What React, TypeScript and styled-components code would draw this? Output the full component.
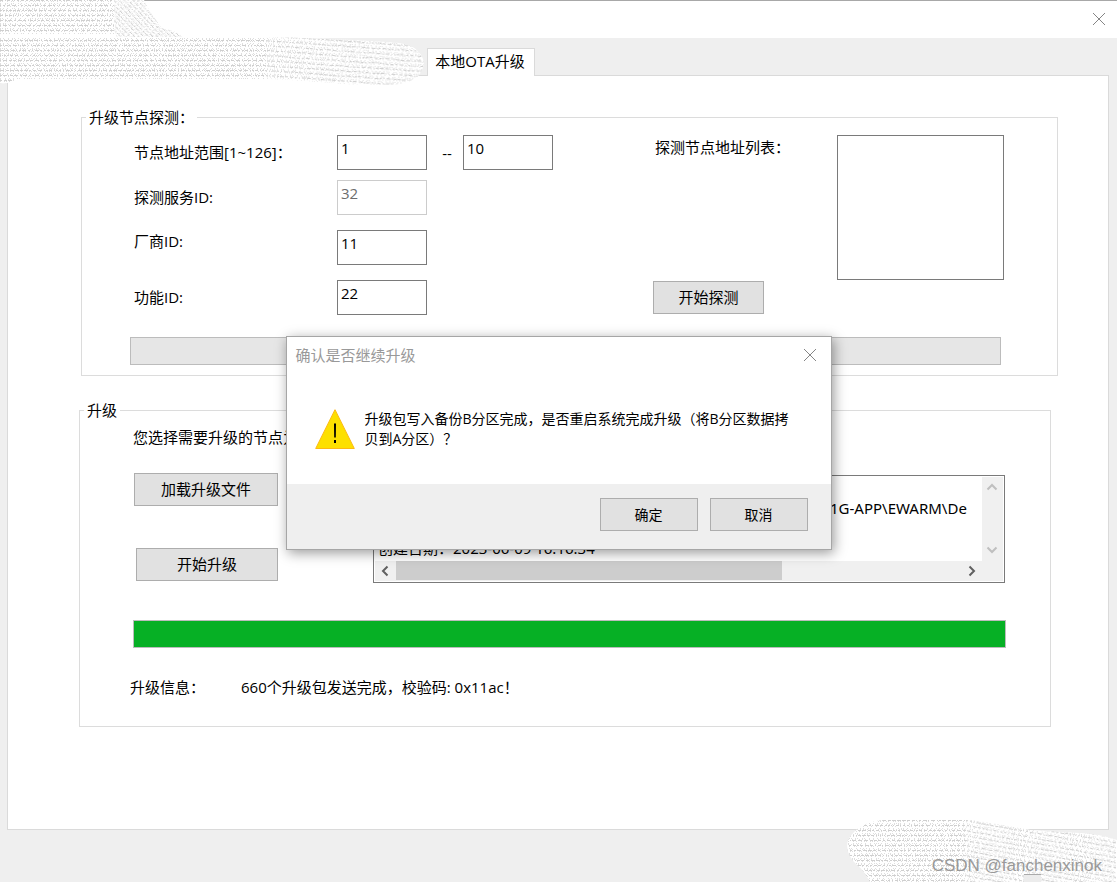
import React from "react";
import styled, { createGlobalStyle, css } from "styled-components";

const GlobalStyle = createGlobalStyle`
  *, *::before, *::after { box-sizing: border-box; }
  body { margin: 0; background: #efefef; }
  body, button, input, textarea {
    font-family: "Open Sans", "Noto Sans CJK SC", sans-serif;
    font-size: 15px;
    line-height: 20px;
    color: #000;
  }
`;

const Window = styled.div`
  position: relative;
  display: flex;
  flex-direction: column;
  min-height: 100vh;
  padding-bottom: 52px;
  overflow: hidden;
  background: #efefef;
`;

const TitleBar = styled.header`
  display: flex;
  justify-content: flex-end;
  align-items: center;
  height: 38px;
  padding: 0 11px 2px 0;
  border-top: 1px solid #a8a8a8;
  background: #fff;
`;

const CloseButton = styled.button`
  display: flex;
  padding: 0;
  border: 0;
  background: none;
`;

const TabStrip = styled.nav`
  display: flex;
  margin-top: 10px;
  padding-left: 427px;
`;

const Tab = styled.button`
  position: relative;
  width: 108px;
  height: 28px;
  margin-bottom: -1px;
  padding: 0 2px 4px 0;
  border: 1px solid #dadada;
  border-bottom: 0;
  background: #fff;
`;

const Panel = styled.main`
  flex: 1;
  margin: 0 8px 0 7px;
  padding: 31px 50px 20px 71px;
  border: 1px solid #dadada;
  background: #fff;
`;

const Group = styled.fieldset<{ $kind: "probe" | "upgrade" }>`
  min-width: 0;
  padding: 0;
  border: 1px solid #dcdcdc;
  ${(p) =>
    p.$kind === "probe"
      ? css`
          margin: 0 0 0 2px;
        `
      : css`
          margin: 24px 7px 0 0;
        `}
`;

const Legend = styled.legend`
  margin-left: 4px;
  padding: 0 3px;
`;

const ProbeBody = styled.div`
  display: grid;
  grid-template-columns: 520px 184px 1fr;
  margin: 8px 53px 0 51px;
`;

const FieldList = styled.div`
  display: flex;
  flex-direction: column;
  gap: 15px;
`;

const FieldPair = styled.div`
  display: flex;
  flex-direction: column;
  gap: 10px;
`;

const Field = styled.div<{ $top?: boolean }>`
  display: flex;
  align-items: ${(p) => (p.$top ? "flex-start" : "center")};
`;

const FieldLabel = styled.label`
  width: 204px;
  padding: 1px 0 3px 1px;
`;

const TextBox = styled.input`
  width: 90px;
  height: 35px;
  padding: 0 3px 10px;
  border: 1px solid #7a7a7a;
  border-radius: 0;
  background: #fff;
  &:disabled {
    border-color: #ccc;
    color: #6d6d6d;
  }
`;

const Dash = styled.span`
  width: 36px;
  padding-left: 4px;
  text-align: center;
`;

const ProbeSide = styled.div`
  display: flex;
  flex-direction: column;
  justify-content: space-between;
  align-items: flex-start;
  padding-bottom: 1px;
`;

const NodeListName = styled.span`
  padding: 2px 0 0 2px;
`;

const NodeList = styled.div`
  height: 145px;
  border: 1px solid #7a7a7a;
`;

const PushButton = styled.button<{ $width: number; $small?: boolean }>`
  width: ${(p) => p.$width}px;
  height: 33px;
  padding: 0 0 ${(p) => (p.$small ? 0 : 2)}px;
  border: 1px solid #adadad;
  background: #e1e1e1;
  font-size: ${(p) => (p.$small ? 14 : 15)}px;
`;

const Progress = styled.div<{ $done?: boolean }>`
  height: 28px;
  border: 1px solid #bcbcbc;
  background: ${(p) => (p.$done ? "#06b025" : "#e6e6e6")};
  margin: ${(p) => (p.$done ? "37px 44px 0 53px" : "22px 56px 10px 48px")};
`;

const NodeHint = styled.p`
  margin: 7px 0 26px 53px;
`;

const UpgradeBody = styled.div`
  display: flex;
  align-items: flex-start;
  margin: 0 45px 0 54px;
`;

const UpgradeActions = styled.div`
  display: flex;
  flex-direction: column;
  align-items: flex-end;
  gap: 42px;
  width: 144px;
`;

const LogBox = styled.div`
  flex: 1;
  display: grid;
  grid-template: 84px 20px / 1fr 21px;
  min-width: 0;
  height: 108px;
  margin: 2px 0 0 95px;
  padding: 1px;
  border: 1px solid #7a7a7a;
  background: #fff;
`;

const LogText = styled.textarea`
  width: 100%;
  height: 84px;
  padding: 1px 0 0 3px;
  border: 0;
  outline: 0;
  resize: none;
  overflow: hidden;
  white-space: pre;
  tab-size: 452px;
  background: none;
  font-family: "Noto Sans", "Noto Sans CJK SC", sans-serif;
`;

const ScrollColumn = styled.div`
  grid-row: 1 / 3;
  grid-column: 2;
  display: flex;
  flex-direction: column;
  justify-content: space-between;
  padding-bottom: 21px;
  background: #f0f0f0;
`;

const ScrollRow = styled.div`
  display: flex;
  background: #f0f0f0;
`;

const ScrollThumb = styled.div`
  width: 386px;
  height: 19px;
  margin: 0 auto 0 1px;
  background: #cdcdcd;
`;

const ArrowButton = styled.button`
  display: flex;
  justify-content: center;
  align-items: center;
  width: 20px;
  height: 20px;
  padding: 0;
  border: 0;
  background: none;
`;

const Status = styled.p`
  display: flex;
  margin: 29px 0 29px 50px;
`;

const StatusName = styled.span`
  width: 111px;
`;

const Dialog = styled.section`
  position: absolute;
  top: 336px;
  left: 50%;
  width: 546px;
  margin-left: -273px;
  border: 1px solid #a6a6a6;
  background: #fff;
  box-shadow: 2px 3px 12px rgba(0, 0, 0, 0.4);
`;

const DialogTitle = styled.header`
  display: flex;
  justify-content: space-between;
  align-items: center;
  height: 36px;
  padding: 0 14px 0 9px;
  color: #999;
`;

const DialogHeading = styled.h1`
  margin: 0;
  font-size: 15px;
  font-weight: 400;
`;

const DialogBody = styled.div`
  display: flex;
  gap: 10px;
  height: 111px;
  padding: 36px 36px 0 28px;
  font-size: 14px;
`;

const DialogText = styled.p`
  margin: 0;
`;

const DialogActions = styled.footer`
  display: flex;
  justify-content: flex-end;
  gap: 12px;
  padding: 14px 23px 18px;
  background: #efefef;
`;

const SmearLayer = styled.svg<{ $corner: "top" | "bottom" }>`
  position: absolute;
  pointer-events: none;
  ${(p) => (p.$corner === "top" ? "top: 0; left: 0;" : "bottom: 0; right: 0;")}
`;

const Watermark = styled.span`
  position: absolute;
  right: 15px;
  bottom: 6px;
  font-family: "Liberation Sans", Arial, sans-serif;
  font-size: 17px;
  color: #999;
`;

const CloseIcon = () => (
  <svg width="14" height="14" viewBox="0 0 14 14" fill="none" stroke="#858585">
    <path d="M1 1 13 13M13 1 1 13" />
  </svg>
);

const turns = { left: 0, up: 90, right: 180, down: 270 };

const Arrow = ({ to, color }: { to: keyof typeof turns; color: string }) => (
  <svg width="12" height="12" viewBox="0 0 12 12" fill="none" stroke={color} strokeWidth="2">
    <path d="M8.5 1.5 4 6l4.5 4.5" transform={`rotate(${turns[to]} 6 6)`} />
  </svg>
);

const WarningIcon = () => (
  <svg width="40" height="41" viewBox="0 0 40 41">
    <path d="M20 .7 39.300 39.500H.7Z" fill="#fde000" stroke="#fdb913" />
    <path d="M19 14.500h2l-.2 14h-1.600ZM19 31h2v3h-2Z" fill="#000" />
  </svg>
);

type Bend = (x: number) => number;

// Dotted strokes that follow one another down the smeared area.
function strokes(width: number, top: number, bottom: number, bend: Bend, seed: number) {
  let s = seed;
  const rnd = () => {
    s = (s * 16807) % 2147483647;
    return s / 2147483647;
  };
  const out: React.ReactElement[] = [];
  for (let y = top; y < bottom; y += 1) {
    const row = ((y % 5) + 5) % 5;
    if (row === 2) continue;
    let d = "";
    for (let x = 0; x <= width; x += 6) {
      const b = bend(x);
      const jitter = b > 0 ? (rnd() - 0.5) * 0.8 : 0;
      d += `${x ? "L" : "M"}${x} ${(y + 0.5 + b + jitter).toFixed(1)}`;
    }
    const strong = row === 0;
    const dash = Array.from({ length: 26 }, () =>
      strong
        ? `${Math.ceil(rnd() * 4)} ${Math.ceil(rnd() * 2)}`
        : `1 ${Math.ceil(rnd() * 4)}`
    ).join(" ");
    out.push(
      <path key={y} d={d} fill="none" stroke={strong ? "#cfcfcf" : "#dedede"} strokeDasharray={dash} />
    );
  }
  return out;
}

const topBlob =
  "M0 0H144Q148 10 157 21Q158 27 166 29Q178 32 184 37H0Z";
const tabBlob =
  "M0 37H270Q340 40 385 42Q391 45 394 52L394 72Q394 80 385 83Q370 86 345 84Q300 80 270 79H16Q10 84 0 83Z";
const tabBlobWide =
  "M0 37H270Q350 39 400 43Q420 46 424 62Q423 80 400 84Q370 86 345 84Q300 80 270 79H16Q10 84 0 83Z";
const cornerBlob =
  "M30 72Q22 58 18 56Q4 44 8 30Q18 12 44 10H132Q160 14 190 20L240 23Q262 24 277 30V72Z";

const TopSmear = () => (
  <SmearLayer $corner="top" width="430" height="90" aria-hidden="true">
    <clipPath id="smear-top"><path d={topBlob} /></clipPath>
    <clipPath id="smear-tab"><path d={tabBlobWide} /></clipPath>
    <path d={topBlob} fill="#fff" />
    <path d={tabBlob} fill="#fff" />
    <path d={tabBlobWide} fill="#fff" />
    <g clipPath="url(#smear-top)">
      {strokes(190, -80, 34, (x) => (x < 115 ? 0 : (x - 115) * 1.1), 7100431)}
    </g>
    <g clipPath="url(#smear-tab)">
      {strokes(430, 20, 86, (x) => (x < 265 ? 0 : (x - 265) * 0.07), 2900417)}
    </g>
  </SmearLayer>
);

const CornerSmear = () => (
  <SmearLayer $corner="bottom" width="277" height="72" aria-hidden="true">
    <clipPath id="smear-corner"><path d={cornerBlob} /></clipPath>
    <path d={cornerBlob} fill="#fff" />
    <g clipPath="url(#smear-corner)">
      {strokes(277, -20, 72, (x) => (x < 125 ? 0 : (x - 125) * 0.18), 5300129)}
    </g>
    <path d="M184 64h17v8h-17Z" fill="#ececec" />
    <path d="M184 64.500h17" stroke="#aaa" />
  </SmearLayer>
);

const logText = "\n\t1G-APP\\EWARM\\De\n\n创建日期：2023-06-09 16:16:34";

export default function App() {
  return (
    <Window>
      <GlobalStyle />
      <TitleBar>
        <CloseButton aria-label="关闭"><CloseIcon /></CloseButton>
      </TitleBar>
      <TabStrip>
        <Tab>本地OTA升级</Tab>
      </TabStrip>
      <Panel>
        <Group $kind="probe">
          <Legend>升级节点探测：</Legend>
          <ProbeBody>
            <FieldList>
              <FieldPair>
                <Field>
                  <FieldLabel htmlFor="from">节点地址范围[1~126]：</FieldLabel>
                  <TextBox id="from" defaultValue="1" />
                  <Dash>--</Dash>
                  <TextBox aria-label="节点地址上限" defaultValue="10" />
                </Field>
                <Field>
                  <FieldLabel htmlFor="service">探测服务ID:</FieldLabel>
                  <TextBox id="service" defaultValue="32" disabled />
                </Field>
              </FieldPair>
              <Field $top>
                <FieldLabel htmlFor="vendor">厂商ID:</FieldLabel>
                <TextBox id="vendor" defaultValue="11" />
              </Field>
              <Field>
                <FieldLabel htmlFor="feature">功能ID:</FieldLabel>
                <TextBox id="feature" defaultValue="22" />
              </Field>
            </FieldList>
            <ProbeSide>
              <NodeListName id="nodes">探测节点地址列表：</NodeListName>
              <PushButton $width={111}>开始探测</PushButton>
            </ProbeSide>
            <NodeList role="listbox" aria-labelledby="nodes" />
          </ProbeBody>
          <Progress role="progressbar" aria-valuenow={0} />
        </Group>

        <Group $kind="upgrade">
          <Legend>升级</Legend>
          <NodeHint>您选择需要升级的节点为</NodeHint>
          <UpgradeBody>
            <UpgradeActions>
              <PushButton $width={144}>加载升级文件</PushButton>
              <PushButton $width={142}>开始升级</PushButton>
            </UpgradeActions>
            <LogBox>
              <LogText aria-label="升级文件" readOnly wrap="off" value={logText} />
              <ScrollColumn>
                <ArrowButton aria-label="向上"><Arrow to="up" color="#bfbfbf" /></ArrowButton>
                <ArrowButton aria-label="向下"><Arrow to="down" color="#bfbfbf" /></ArrowButton>
              </ScrollColumn>
              <ScrollRow>
                <ArrowButton aria-label="向左"><Arrow to="left" color="#606060" /></ArrowButton>
                <ScrollThumb />
                <ArrowButton aria-label="向右"><Arrow to="right" color="#606060" /></ArrowButton>
              </ScrollRow>
            </LogBox>
          </UpgradeBody>
          <Progress $done role="progressbar" aria-valuenow={100} />
          <Status>
            <StatusName>升级信息：</StatusName>
            <span>660个升级包发送完成，校验码: 0x11ac！</span>
          </Status>
        </Group>
      </Panel>

      <Dialog role="dialog" aria-labelledby="dialog-title">
        <DialogTitle>
          <DialogHeading id="dialog-title">确认是否继续升级</DialogHeading>
          <CloseButton aria-label="关闭"><CloseIcon /></CloseButton>
        </DialogTitle>
        <DialogBody>
          <WarningIcon />
          <DialogText>
            升级包写入备份B分区完成，是否重启系统完成升级（将B分区数据拷
            <br />
            贝到A分区）？
          </DialogText>
        </DialogBody>
        <DialogActions>
          <PushButton $width={98} $small>确定</PushButton>
          <PushButton $width={98} $small>取消</PushButton>
        </DialogActions>
      </Dialog>

      <TopSmear />
      <CornerSmear />
      <Watermark>CSDN @fanchenxinok</Watermark>
    </Window>
  );
}
